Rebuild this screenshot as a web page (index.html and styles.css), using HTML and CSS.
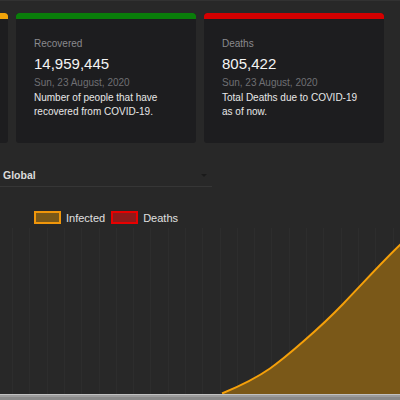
FILE: index.html
```html
<!DOCTYPE html>
<html lang="en">
<head>
<meta charset="utf-8">
<title>COVID-19 Dashboard</title>
<link rel="stylesheet" href="styles.css">
</head>
<body>
<div class="page">
  <div class="cards">
    <div class="card">
      <div class="stripe stripe-orange"></div>
      <div class="card-body">
        <div class="label">Infected</div>
        <div class="number">23,301,423</div>
        <div class="date">Sun, 23 August, 2020</div>
        <div class="desc">Number of active cases of COVID-19.</div>
      </div>
    </div>
    <div class="card">
      <div class="stripe stripe-green"></div>
      <div class="card-body">
        <div class="label">Recovered</div>
        <div class="number">14,959,445</div>
        <div class="date">Sun, 23 August, 2020</div>
        <div class="desc">Number of people that have recovered from COVID-19.</div>
      </div>
    </div>
    <div class="card">
      <div class="stripe stripe-red"></div>
      <div class="card-body">
        <div class="label">Deaths</div>
        <div class="number">805,422</div>
        <div class="date">Sun, 23 August, 2020</div>
        <div class="desc">Total Deaths due to COVID-19 as of now.</div>
      </div>
    </div>
  </div>

  <div class="chart-section">
    <div class="select">
      <span class="select-text">Global</span>
      <span class="select-arrow"></span>
    </div>
    <div class="legend">
      <div class="legend-item"><span class="swatch swatch-infected"></span><span>Infected</span></div>
      <div class="legend-item"><span class="swatch swatch-deaths"></span><span>Deaths</span></div>
    </div>
    <svg class="chart" width="400" height="166" viewBox="0 0 400 166">
      <g stroke="#2d2d2d" stroke-width="1">
        <line x1="12.5" y1="0" x2="12.5" y2="166"/>
        <line x1="29.5" y1="0" x2="29.5" y2="166"/>
        <line x1="47.5" y1="0" x2="47.5" y2="166"/>
        <line x1="64.5" y1="0" x2="64.5" y2="166"/>
        <line x1="81.5" y1="0" x2="81.5" y2="166"/>
        <line x1="99.5" y1="0" x2="99.5" y2="166"/>
        <line x1="116.5" y1="0" x2="116.5" y2="166"/>
        <line x1="133.5" y1="0" x2="133.5" y2="166"/>
        <line x1="150.5" y1="0" x2="150.5" y2="166"/>
        <line x1="168.5" y1="0" x2="168.5" y2="166"/>
        <line x1="185.5" y1="0" x2="185.5" y2="166"/>
        <line x1="202.5" y1="0" x2="202.5" y2="166"/>
        <line x1="220.5" y1="0" x2="220.5" y2="166"/>
        <line x1="237.5" y1="0" x2="237.5" y2="166"/>
        <line x1="254.5" y1="0" x2="254.5" y2="166"/>
        <line x1="271.5" y1="0" x2="271.5" y2="166"/>
        <line x1="289.5" y1="0" x2="289.5" y2="166"/>
        <line x1="306.5" y1="0" x2="306.5" y2="166"/>
        <line x1="323.5" y1="0" x2="323.5" y2="166"/>
        <line x1="341.5" y1="0" x2="341.5" y2="166"/>
        <line x1="358.5" y1="0" x2="358.5" y2="166"/>
        <line x1="375.5" y1="0" x2="375.5" y2="166"/>
        <line x1="393.5" y1="0" x2="393.5" y2="166"/>
      </g>
      <path d="M222 165.5 C240 158 255 151 270 140.5 S320 100 343 76 S385 31 401 16 L401 166 L222 166 Z" fill="#7a5818"/>
      <path d="M222 165.5 C240 158 255 151 270 140.5 S320 100 343 76 S385 31 401 16" fill="none" stroke="#f5a00a" stroke-width="2"/>
    </svg>
  </div>
  <div class="hscroll"></div>
</div>
</body>
</html>
```

FILE: styles.css
```css
html, body {
  margin: 0;
  padding: 0;
}

body {
  background: #282828;
  font-family: "Liberation Sans", Arial, sans-serif;
  overflow: hidden;
  width: 400px;
  height: 400px;
}

.page {
  width: 400px;
  height: 400px;
  display: flex;
  flex-direction: column;
  border-top: 1px solid #323232;
  box-sizing: border-box;
  overflow: hidden;
}

.cards {
  display: flex;
  gap: 8px;
  margin-left: -172px;
  padding-top: 12px;
}

.card {
  flex: none;
  width: 180px;
  height: 130px;
  background: #1d1d1f;
  border-radius: 3px;
  overflow: hidden;
}

.stripe {
  height: 6px;
  border-radius: 3px 3px 0 0;
}

.stripe-orange { background: #f0a30a; }
.stripe-green { background: #0a7d0a; }
.stripe-red { background: #d40000; }

.card-body {
  padding: 18px 18px 0 18px;
}

.label {
  font-size: 10px;
  line-height: 14px;
  color: #8a8a8e;
}

.number {
  margin-top: 3px;
  font-size: 15px;
  line-height: 20px;
  color: #f4f4f4;
}

.date {
  margin-top: 2px;
  font-size: 10px;
  line-height: 14px;
  color: #6f6f73;
}

.desc {
  margin-top: 1px;
  font-size: 10px;
  line-height: 14px;
  color: #e8e8e8;
}

.chart-section {
  display: flex;
  flex-direction: column;
}

.select {
  margin-top: 17px;
  width: 212px;
  box-sizing: border-box;
  padding: 8px 0 4px 3px;
  border-bottom: 1px solid #363636;
  display: flex;
  align-items: center;
  justify-content: space-between;
}

.select-text {
  font-size: 10.5px;
  line-height: 14px;
  font-weight: bold;
  color: #dcdcdc;
}

.select-arrow {
  width: 0;
  height: 0;
  margin-right: 5px;
  border-left: 3px solid transparent;
  border-right: 3px solid transparent;
  border-top: 3px solid #1a1a1a;
}

.legend {
  display: flex;
  gap: 6px;
  margin-top: 24px;
  margin-left: 34px;
  height: 13px;
}

.legend-item {
  display: flex;
  align-items: center;
  gap: 5px;
  font-size: 11px;
  color: #e0e0e0;
}

.swatch {
  width: 27px;
  height: 13px;
  box-sizing: border-box;
  border: 2px solid;
}

.swatch-infected {
  background: #7a5818;
  border-color: #f0960a;
}

.swatch-deaths {
  background: #8e1a1a;
  border-color: #e80000;
}

.chart {
  display: block;
  margin-top: 4px;
  flex: none;
}

.hscroll {
  height: 6px;
  flex: none;
  background: linear-gradient(#c2c2c2 0, #c2c2c2 1px, #9c9c9c 1px, #9c9c9c 3px, #8a8a8a 3px);
}
```
